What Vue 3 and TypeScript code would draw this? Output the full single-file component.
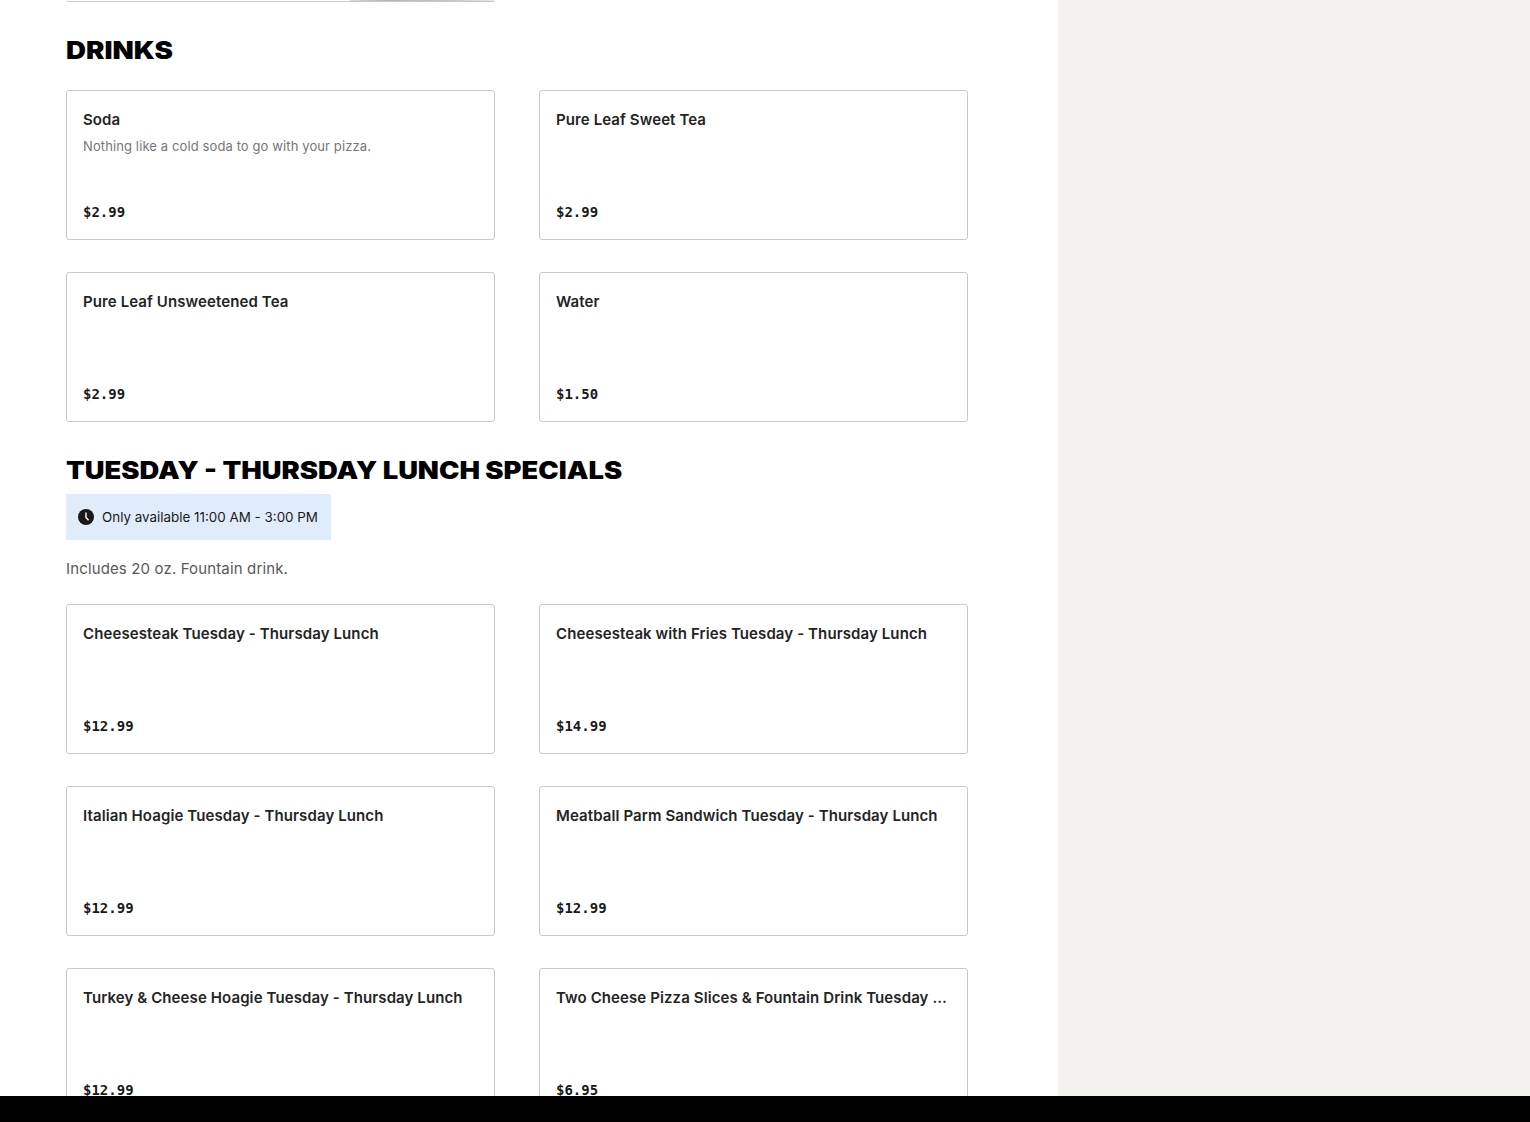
<script setup lang="ts">
interface Item { name: string; desc?: string; price: string }
const drinks: Item[] = [
  { name: 'Soda', desc: 'Nothing like a cold soda to go with your pizza.', price: '$2.99' },
  { name: 'Pure Leaf Sweet Tea', price: '$2.99' },
  { name: 'Pure Leaf Unsweetened Tea', price: '$2.99' },
  { name: 'Water', price: '$1.50' },
]
const lunch: Item[] = [
  { name: 'Cheesesteak Tuesday - Thursday Lunch', price: '$12.99' },
  { name: 'Cheesesteak with Fries Tuesday - Thursday Lunch', price: '$14.99' },
  { name: 'Italian Hoagie Tuesday - Thursday Lunch', price: '$12.99' },
  { name: 'Meatball Parm Sandwich Tuesday - Thursday Lunch', price: '$12.99' },
  { name: 'Turkey & Cheese Hoagie Tuesday - Thursday Lunch', price: '$12.99' },
  { name: 'Two Cheese Pizza Slices & Fountain Drink Tuesday - Thursday Lunch', price: '$6.95' },
]
</script>

<template>
  <div class="page">
    <div class="viewport">
      <main class="main">
        <div class="stub-row">
          <div class="stub"><div class="stub-img"></div></div>
        </div>
        <h2 class="heading drinks">DRINKS</h2>
        <div class="grid">
          <article v-for="d in drinks" :key="d.name" class="card">
            <div class="name">{{ d.name }}</div>
            <div v-if="d.desc" class="desc">{{ d.desc }}</div>
            <div class="price">{{ d.price }}</div>
          </article>
        </div>
        <h2 class="heading lunch">TUESDAY - THURSDAY LUNCH SPECIALS</h2>
        <div class="notice">
          <svg class="clock" viewBox="0 0 16 16" width="16" height="16" aria-hidden="true">
            <circle cx="8" cy="8" r="8" fill="#191919" />
            <path d="M8 3.6V8.4L10.6 11.2" fill="none" stroke="#fff" stroke-width="1.4" />
          </svg>
          <span>Only available 11:00 AM - 3:00 PM</span>
        </div>
        <p class="includes">Includes 20 oz. Fountain drink.</p>
        <div class="grid">
          <article v-for="d in lunch" :key="d.name" class="card">
            <div class="name">{{ d.name }}</div>
            <div class="price">{{ d.price }}</div>
          </article>
        </div>
      </main>
      <aside class="side"></aside>
    </div>
    <div class="bar"></div>
  </div>
</template>

<style>
html, body { margin: 0; background: #fff; overflow: hidden; }
</style>

<style scoped>
.page { height: 1122px; display: flex; flex-direction: column; overflow: hidden; font-family: Inter, "Liberation Sans", sans-serif; color: #191919; }
.viewport { height: 1096px; display: flex; overflow: hidden; }
.main { width: 1058px; box-sizing: border-box; padding-left: 66px; background: #fff; flex: none; }
.side { flex: 1; background: #f3f2ef; }
.stub-row { width: 429px; }
.stub { height: 2px; box-sizing: border-box; border-bottom: 1px solid #c9c9c9; border-radius: 0 0 3px 3px; overflow: hidden; }
.stub-img { width: 144px; height: 1px; margin-left: 284px; background: linear-gradient(90deg, #d8d8d8, #b5b5b5 25%, #c6c6c6 70%, #e8e8e8); }
.heading { margin: 0; font-weight: 900; color: #000; font-size: 24px; line-height: 32px; white-space: nowrap; transform-origin: left center; }
.drinks { margin-top: 33px; margin-bottom: 23px; transform: scaleX(1.153); }
.lunch { margin-top: 33px; margin-bottom: 7px; transform: scaleX(1.14); }
.grid { display: grid; grid-template-columns: 429px 429px; column-gap: 44px; row-gap: 32px; width: 902px; }
.card { height: 150px; box-sizing: border-box; border: 1px solid #c9c9c9; border-radius: 3px; padding: 18px 16px 0; display: flex; flex-direction: column; background: #fff; }
.name { font-size: 15px; font-weight: 600; letter-spacing: 0.1px; line-height: 22px; white-space: nowrap; overflow: hidden; text-overflow: ellipsis; color: #242424; }
.desc { font-size: 13px; letter-spacing: 0.11px; line-height: 20px; color: #767676; margin-top: 5px; }
.price { margin-top: auto; margin-bottom: 17px; font-family: "DejaVu Sans Mono", monospace; font-size: 14px; font-weight: 700; line-height: 20px; color: #191919; }
.notice { display: inline-flex; align-items: center; gap: 8px; width: 265px; height: 46px; box-sizing: border-box; padding-left: 12px; background: #e1ecfb; font-size: 13.4px; white-space: nowrap; }
.clock { flex: none; }
.includes { margin: 19px 0 25px; font-size: 15px; letter-spacing: 0.14px; line-height: 20px; color: #595959; }
.bar { height: 26px; background: #000; flex: none; }
</style>
